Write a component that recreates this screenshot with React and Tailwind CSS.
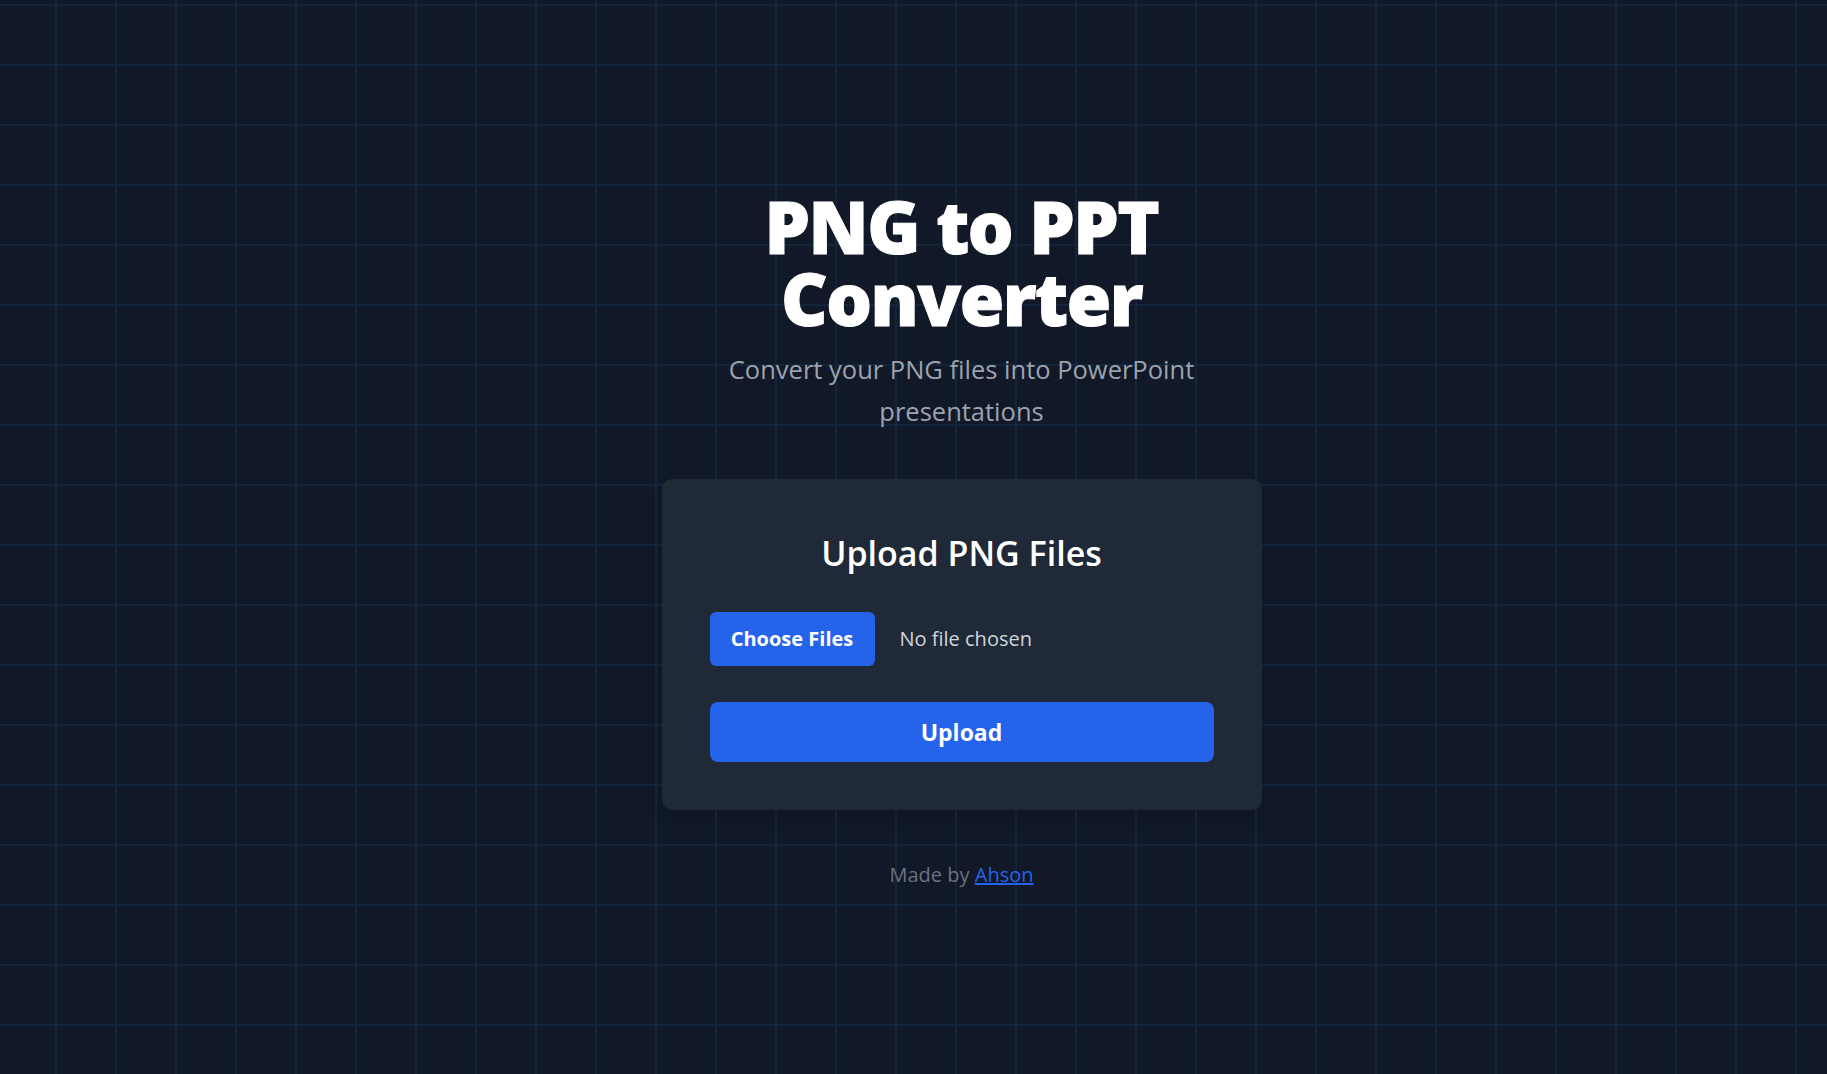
import { useState } from 'react'

const App = () => {
  const [files, setFiles] = useState([])

  return (
    <div
      className="min-h-screen w-full flex flex-col items-center justify-center pl-[96px] pt-[6px] bg-[#111827] bg-[linear-gradient(to_right,#12253a_2px,transparent_2px),linear-gradient(to_bottom,#12253a_2px,transparent_2px)] bg-[size:60px_60px] bg-[position:55px_4px] font-['Open_Sans',sans-serif]"
    >
      <div className="w-[600px] flex flex-col items-center">
        {/* Header */}
        <h1 className="w-[505px] text-white text-center text-[72px] leading-[72px] font-extrabold tracking-[-1.5px] [-webkit-text-stroke:1px_white]">
          PNG to PPT Converter
        </h1>
        <p className="mt-[14px] w-[505px] text-[#9ca3af] text-center text-[25.5px] leading-[42px] px-[10px]">
          Convert your PNG files into PowerPoint presentations
        </p>

        {/* Upload card */}
        <div className="mt-[47px] w-full bg-[#1f2937] rounded-[10px] p-[48px] shadow-lg">
          <h2 className="text-white text-center text-[34px] leading-[52px] font-semibold">
            Upload PNG Files
          </h2>
          <div className="mt-[33px] flex items-center gap-[25px]">
            <label className="h-[54px] w-[165px] flex items-center justify-center rounded-[6px] bg-[#2563eb] text-white text-[20px] font-bold cursor-pointer">
              Choose Files
              <input
                type="file"
                multiple
                accept="image/png"
                className="hidden"
                onChange={(e) => setFiles(Array.from(e.target.files))}
              />
            </label>
            <span className="text-[#d1d5db] text-[20px]">
              {files.length ? `${files.length} files` : 'No file chosen'}
            </span>
          </div>
          <button className="mt-[36px] w-full h-[60px] rounded-[8px] bg-[#2563eb] text-white text-[23px] font-bold">
            Upload
          </button>
        </div>

        {/* Footer */}
        <p className="mt-[50px] text-[#6b7280] text-[20px]">
          Made by{' '}
          <a href="#" className="text-[#2563eb] underline">
            Ahson
          </a>
        </p>
      </div>
    </div>
  )
}

export default App
